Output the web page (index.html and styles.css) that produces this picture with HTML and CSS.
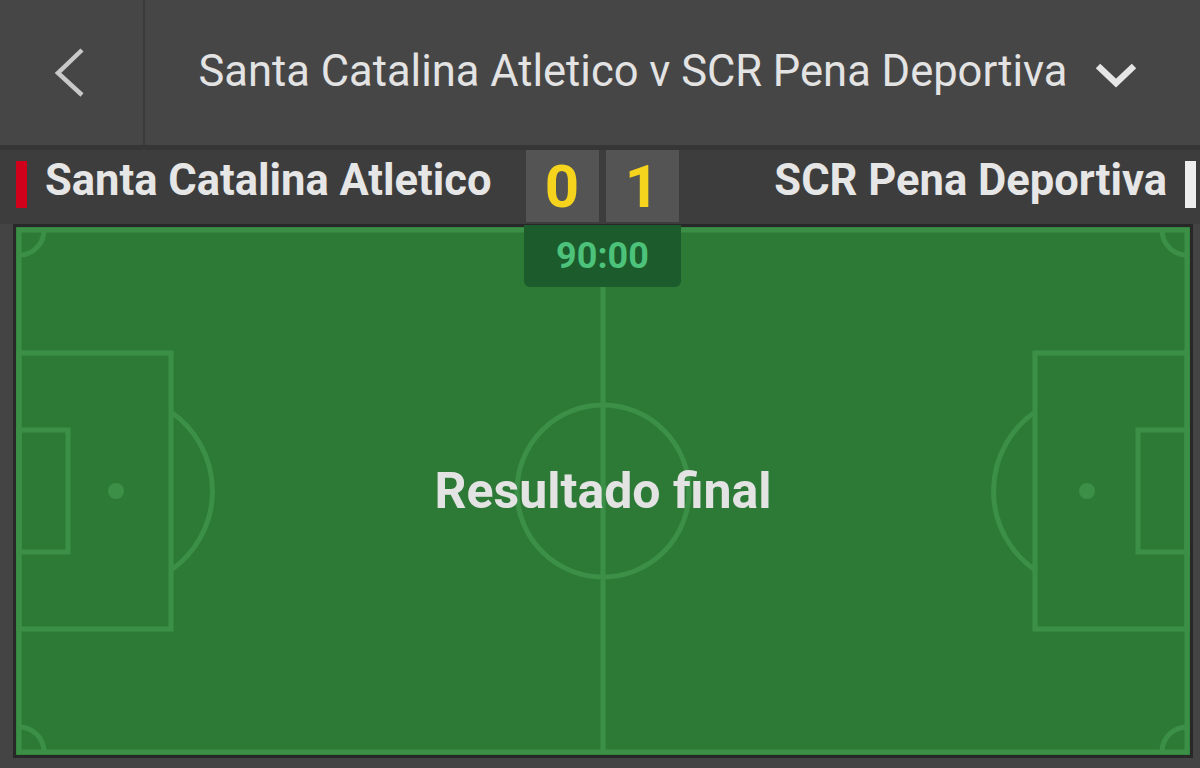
FILE: index.html
```html
<!DOCTYPE html>
<html lang="es">
<head>
  <meta charset="UTF-8">
  <meta name="viewport" content="width=device-width, initial-scale=1.0">
  <title>Santa Catalina Atletico v SCR Pena Deportiva</title>
  <link rel="stylesheet" href="styles.css">
</head>
<body>
  <header class="header">
    <a class="back" href="#">
      <svg width="40" height="56" viewBox="0 0 40 56">
        <polyline points="34,6 10,29 34,51" fill="none" stroke="#c9c9c9" stroke-width="4.5"/>
      </svg>
    </a>
    <div class="title">
      <span class="title-text">Santa Catalina Atletico v SCR Pena Deportiva</span>
      <svg class="caret" width="44" height="30" viewBox="0 0 44 30">
        <polyline points="4,5 22,22 40,5" fill="none" stroke="#e6e6e6" stroke-width="6.5"/>
      </svg>
    </div>
  </header>

  <div class="scorebar">
    <div class="team home">
      <span class="flag red"></span>
      <span class="team-name">Santa Catalina Atletico</span>
    </div>
    <div class="score">
      <span class="goal">0</span>
      <span class="goal">1</span>
    </div>
    <div class="team away">
      <span class="team-name">SCR Pena Deportiva</span>
      <span class="flag white"></span>
    </div>
  </div>

  <div class="pitch-wrap">
    <div class="pitch">
      <svg class="lines" width="1174" height="528" viewBox="0 0 1174 528">
        <g fill="none" stroke="#3c8f46" stroke-width="5">
          <rect x="3" y="3" width="1168" height="522"/>
          <line x1="587" y1="3" x2="587" y2="525"/>
          <circle cx="587" cy="264" r="86"/>
          <!-- izquierda -->
          <rect x="3" y="126" width="152" height="276"/>
          <rect x="3" y="203" width="49" height="122"/>
          <path d="M155,185 A96,96 0 0 1 155,343"/>
          <!-- derecha -->
          <rect x="1019" y="126" width="152" height="276"/>
          <rect x="1122" y="203" width="49" height="122"/>
          <path d="M1019,185 A96,96 0 0 0 1019,343"/>
          <!-- esquinas -->
          <path d="M3,28 A25,25 0 0 0 28,3"/>
          <path d="M1146,3 A25,25 0 0 0 1171,28"/>
          <path d="M3,500 A25,25 0 0 1 28,525"/>
          <path d="M1146,525 A25,25 0 0 1 1171,500"/>
        </g>
        <g fill="#3c8f46">
          <circle cx="100" cy="264" r="8"/>
          <circle cx="1071" cy="264" r="8"/>
          <circle cx="587" cy="264" r="6"/>
        </g>
      </svg>
      <div class="clock">90:00</div>
      <div class="status">Resultado final</div>
    </div>
  </div>
</body>
</html>
```

FILE: styles.css
```css
body {
  margin: 0;
  background-color: #444444;
  font-family: Roboto, "Liberation Sans", sans-serif;
  width: 1200px;
  height: 768px;
  overflow: hidden;
}

.header {
  display: flex;
  height: 145px;
  background-color: #464646;
  border-bottom: 5px solid #363636;
}

.back {
  width: 145px;
  border-right: 2px solid #3b3b3b;
  display: flex;
  align-items: center;
  padding-left: 48px;
  box-sizing: border-box;
  margin-top: -2px;
}

.title {
  flex: 1;
  display: flex;
  align-items: center;
  justify-content: center;
  gap: 27px;
  padding-right: 8px;
}

.title-text {
  color: #e3e3e3;
  font-size: 43.5px;
  font-weight: 400;
  margin-top: -2px;
}

.caret {
  margin-top: 6px;
}

.scorebar {
  display: grid;
  grid-template-columns: 1fr auto 1fr;
  height: 74px;
  background-color: #3d3d3d;
}

.team {
  display: flex;
  align-items: center;
  gap: 18px;
  padding-bottom: 6px;
}

.team.home {
  padding-left: 16px;
}

.team.away {
  justify-content: flex-end;
  padding-right: 4px;
}

.team-name {
  color: #e6e6e6;
  font-size: 43.5px;
  font-weight: 700;
  margin-top: -8px;
}

.flag {
  width: 11px;
  height: 47px;
}

.flag.red {
  background-color: #d0021b;
}

.flag.white {
  background-color: #eeeeee;
}

.score {
  display: flex;
  gap: 7px;
  padding: 0 3px 0 7px;
}

.goal {
  width: 73px;
  height: 72px;
  background-color: #545454;
  color: #f6d41e;
  font-size: 60px;
  font-weight: 700;
  display: flex;
  align-items: center;
  justify-content: center;
}

.pitch-wrap {
  margin-left: 13px;
  width: 1174px;
  border: 3px solid #282828;
}

.pitch {
  position: relative;
  height: 528px;
  background-color: #2d7a37;
}

.lines {
  display: block;
}

.clock {
  position: absolute;
  top: -2px;
  left: 508px;
  width: 157px;
  height: 62px;
  background-color: #1c5b2b;
  border-radius: 0 0 6px 6px;
  color: #4cc27b;
  font-size: 36px;
  font-weight: 700;
  display: flex;
  align-items: center;
  justify-content: center;
}

.status {
  position: absolute;
  top: 235px;
  left: 0;
  right: 0;
  text-align: center;
  color: #e3e3e3;
  font-size: 50px;
  font-weight: 700;
}
```
